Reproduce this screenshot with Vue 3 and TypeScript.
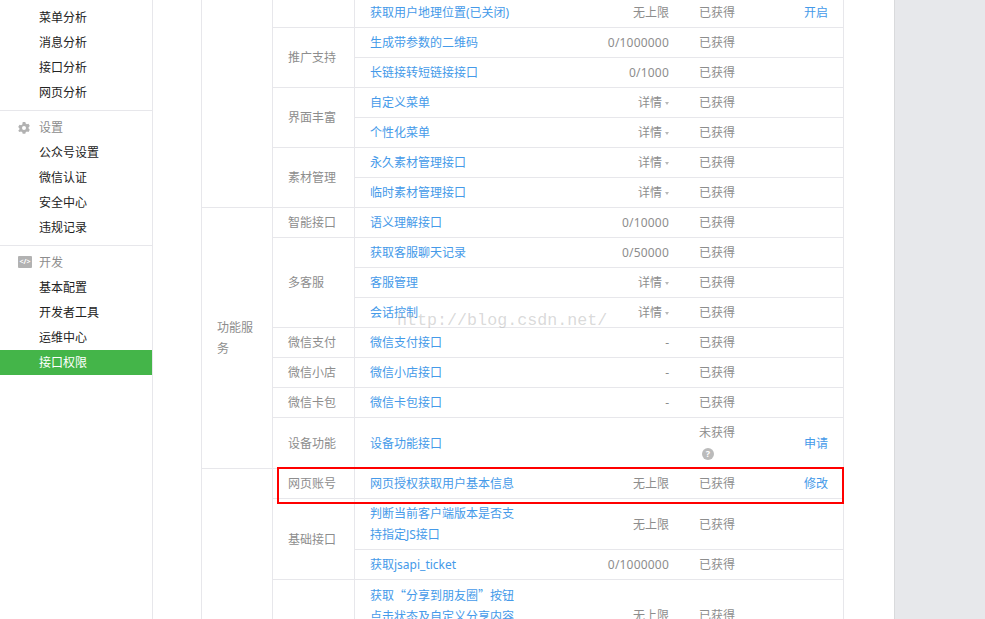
<script setup lang="ts">
interface Row {
  top?: { label: string; span: number }
  group?: { label: string; span: number }
  name: string
  limit: string
  caret?: boolean
  status: string
  help?: boolean
  action?: string
  wideQuotes?: boolean
}

const nav = [
  { items: ['菜单分析', '消息分析', '接口分析', '网页分析'] },
  { title: '设置', icon: 'gear', items: ['公众号设置', '微信认证', '安全中心', '违规记录'] },
  { title: '开发', icon: 'code', items: ['基本配置', '开发者工具', '运维中心', '接口权限'] },
]

const ok = '已获得'
const rows: Row[] = [
  { top: { label: '', span: 7 }, group: { label: '', span: 1 }, name: '获取用户地理位置(已关闭)', limit: '无上限', status: ok, action: '开启' },
  { group: { label: '推广支持', span: 2 }, name: '生成带参数的二维码', limit: '0/1000000', status: ok },
  { name: '长链接转短链接接口', limit: '0/1000', status: ok },
  { group: { label: '界面丰富', span: 2 }, name: '自定义菜单', limit: '详情', caret: true, status: ok },
  { name: '个性化菜单', limit: '详情', caret: true, status: ok },
  { group: { label: '素材管理', span: 2 }, name: '永久素材管理接口', limit: '详情', caret: true, status: ok },
  { name: '临时素材管理接口', limit: '详情', caret: true, status: ok },
  { top: { label: '功能服务', span: 8 }, group: { label: '智能接口', span: 1 }, name: '语义理解接口', limit: '0/10000', status: ok },
  { group: { label: '多客服', span: 3 }, name: '获取客服聊天记录', limit: '0/50000', status: ok },
  { name: '客服管理', limit: '详情', caret: true, status: ok },
  { name: '会话控制', limit: '详情', caret: true, status: ok },
  { group: { label: '微信支付', span: 1 }, name: '微信支付接口', limit: '-', status: ok },
  { group: { label: '微信小店', span: 1 }, name: '微信小店接口', limit: '-', status: ok },
  { group: { label: '微信卡包', span: 1 }, name: '微信卡包接口', limit: '-', status: ok },
  { group: { label: '设备功能', span: 1 }, name: '设备功能接口', limit: '', status: '未获得', help: true, action: '申请' },
  { top: { label: '', span: 4 }, group: { label: '网页账号', span: 1 }, name: '网页授权获取用户基本信息', limit: '无上限', status: ok, action: '修改' },
  { group: { label: '基础接口', span: 2 }, name: '判断当前客户端版本是否支持指定JS接口', limit: '无上限', status: ok },
  { name: '获取jsapi_ticket', limit: '0/1000000', status: ok },
  { group: { label: '', span: 1 }, name: '获取“分享到朋友圈”按钮点击状态及自定义分享内容接口', limit: '无上限', status: ok, wideQuotes: true },
]

const isNumeric = (value: string): boolean => /\d/.test(value)
</script>

<template>
  <div class="page">
    <aside class="sidebar">
      <section v-for="(g, i) in nav" :key="i" class="nav-group">
        <h3 v-if="g.title" class="nav-title">
          <svg v-if="g.icon === 'gear'" class="nav-icon" width="14" height="14" viewBox="0 0 14 14">
            <path
              fill="#b2b2b2"
              fill-rule="evenodd"
              d="M5.7 1h2.6l.4 1.6 1.2.7 1.6-.5 1.3 2.2-1.2 1.2v1.4l1.2 1.2-1.3 2.2-1.6-.5-1.2.7-.4 1.6H5.7l-.4-1.6-1.2-.7-1.6.5L1.2 9.8l1.2-1.2V7.2L1.2 6l1.3-2.2 1.6.5 1.2-.7zM7 5a2 2 0 1 0 0 4 2 2 0 0 0 0-4z"
            />
          </svg>
          <span v-else class="code-icon">&lt;/&gt;</span>
          {{ g.title }}
        </h3>
        <a v-for="item in g.items" :key="item" class="nav-item" :class="{ active: item === '接口权限' }">{{ item }}</a>
      </section>
    </aside>

    <main class="main">
      <table class="grid">
        <colgroup>
          <col class="c-top" />
          <col class="c-group" />
          <col class="c-name" />
          <col class="c-limit" />
          <col class="c-status" />
          <col class="c-action" />
        </colgroup>
        <tbody>
          <tr v-for="r in rows" :key="r.name">
            <td v-if="r.top" :rowspan="r.top.span" class="cell ruled">{{ r.top.label }}</td>
            <td v-if="r.group" :rowspan="r.group.span" class="cell ruled">{{ r.group.label }}</td>
            <td class="cell ruled link" :class="{ cjk: r.wideQuotes }">{{ r.name }}</td>
            <td class="cell limit" :class="{ numeric: isNumeric(r.limit) }">
              {{ r.limit }}<i v-if="r.caret" class="caret"></i>
            </td>
            <td class="cell">
              {{ r.status }}
              <span v-if="r.help" class="help-line"><span class="help">?</span></span>
            </td>
            <td class="cell action link">{{ r.action }}</td>
          </tr>
        </tbody>
      </table>
      <div class="highlight"></div>
      <div class="watermark">http://blog.csdn.net/</div>
    </main>

    <div class="backdrop"></div>
  </div>
</template>

<style>
html,
body {
  margin: 0;
  overflow: hidden;
}
</style>

<style scoped>
.page {
  display: flex;
  width: 985px;
  height: 619px;
  overflow: hidden;
  background: #fff;
  font-family: "Noto Sans", "Noto Sans CJK SC", sans-serif;
  font-size: 12px;
}

.sidebar {
  flex: none;
  width: 152px;
  padding-top: 5px;
  border-right: 1px solid #e7e7eb;
}

.nav-group {
  padding: 4px 0 5px;
  border-bottom: 1px solid #e7e7eb;
}

.nav-group:first-child {
  padding-top: 0;
}

.nav-group:last-child {
  padding-bottom: 0;
  border-bottom: 0;
}

.nav-title {
  display: flex;
  align-items: center;
  box-sizing: border-box;
  height: 25px;
  margin: 0;
  padding: 0 0 2px 39px;
  position: relative;
  font-size: 12px;
  font-weight: 400;
  color: #8d8d8d;
}

.nav-icon {
  position: absolute;
  left: 17px;
  top: 6px;
}

.code-icon {
  position: absolute;
  left: 18px;
  top: 6px;
  width: 14px;
  height: 12px;
  border-radius: 1px;
  background: #b2b2b2;
  color: #fff;
  font-size: 7px;
  font-weight: 700;
  line-height: 12px;
  text-align: center;
}

.nav-item {
  display: block;
  height: 25px;
  padding-left: 39px;
  line-height: 25px;
  color: #222;
}

.nav-item.active {
  background: #44b549;
  color: #fff;
}

.main {
  flex: none;
  position: relative;
  width: 741px;
}

.grid {
  width: 643px;
  margin: -2px 0 0 48px;
  border-collapse: separate;
  border-spacing: 0;
  border-right: 1px solid #e7e7eb;
  table-layout: fixed;
  color: #8d8d8d;
}

.c-top { width: 71px; }
.c-group { width: 82px; }
.c-name { width: 176px; }
.c-limit { width: 154px; }
.c-status { width: 90px; }

.cell {
  padding: 4px 15px;
  border-bottom: 1px solid #e7e7eb;
  line-height: 21px;
  word-break: break-all;
  vertical-align: middle;
}

.ruled {
  border-left: 1px solid #e7e7eb;
}

.link {
  color: #459ae9;
}

.cjk {
  font-family: "Noto Sans CJK SC", sans-serif;
}

.limit,
.action {
  text-align: right;
}

.numeric {
  letter-spacing: 0.2px;
}

.caret {
  display: inline-block;
  margin-left: 3px;
  border-style: solid;
  border-width: 3px 2.5px 0;
  border-color: #b8b8b8 transparent transparent;
  vertical-align: middle;
}

.help-line {
  display: flex;
  align-items: center;
  height: 21px;
  padding-left: 3px;
}

.help {
  display: block;
  width: 12px;
  height: 12px;
  border-radius: 50%;
  background: #bbb;
  color: #fff;
  font-size: 9px;
  font-weight: 700;
  line-height: 12px;
  text-align: center;
}

.highlight {
  position: absolute;
  left: 124px;
  top: 467px;
  width: 563px;
  height: 33px;
  border: 2px solid #f00;
  pointer-events: none;
}

.watermark {
  position: absolute;
  left: 244px;
  top: 310px;
  font-family: "Liberation Mono", monospace;
  font-size: 16.7px;
  line-height: 22px;
  color: rgba(160, 160, 160, 0.4);
  pointer-events: none;
  white-space: nowrap;
}

.backdrop {
  flex: 1;
  background: #e7e8eb;
  border-left: 1px solid #d9dadc;
}
</style>
